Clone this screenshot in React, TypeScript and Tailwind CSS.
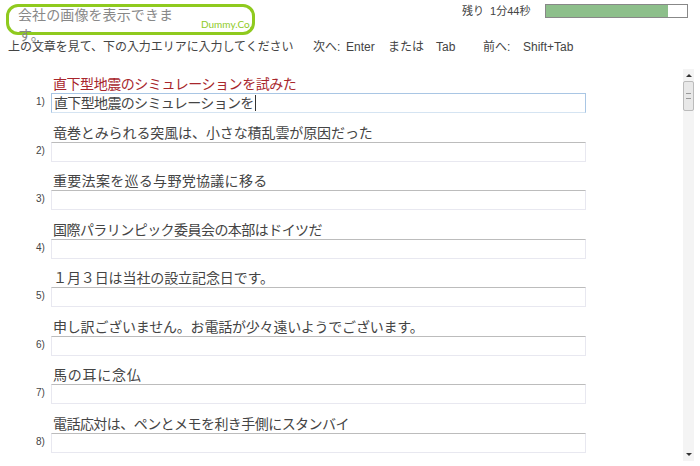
const questions = [
  { text: '直下型地震のシミュレーションを試みた', spacing: 'tracking-[-0.45px]' },
  { text: '竜巻とみられる突風は、小さな積乱雲が原因だった', spacing: 'tracking-[-0.1px]' },
  { text: '重要法案を巡る与野党協議に移る', spacing: 'tracking-[0.3px]' },
  { text: '国際パラリンピック委員会の本部はドイツだ', spacing: 'tracking-[-0.55px]' },
  { text: '１月３日は当社の設立記念日です。', spacing: 'tracking-[-0.1px]' },
  { text: '申し訳ございません。お電話が少々遠いようでございます。', spacing: 'tracking-[-0.2px]' },
  { text: '馬の耳に念仏', spacing: 'tracking-[0.75px]' },
  { text: '電話応対は、ペンとメモを利き手側にスタンバイ', spacing: 'tracking-[-0.55px]' },
];

const font = { fontFamily: '"Liberation Sans", "Noto Sans CJK JP", sans-serif' };

export default function App() {
  return (
    <div className="h-[466px] w-[700px] overflow-hidden bg-white text-[#444]" style={font}>
      <div className="flex h-[36px] items-start pl-[6px] pt-[4px]">
        <div className="flex h-[31px] w-[249px] items-end rounded-[12px] border-[3px] border-[#8fca1e] pl-[9px]">
          <span className="-mt-[2px] self-start text-[14px] leading-[20px] tracking-[0.1px] text-[#888]">会社の画像を表示できます。</span>
          <span className="mb-[2px] ml-[9px] text-[10px] leading-[12px] font-['Lato'] text-[#8fca1e]">Dummy.Co.</span>
        </div>
        <div className="ml-[207px] flex items-center">
          <span className="w-[83px] whitespace-pre text-[11px] leading-[14px]">残り  1分44秒</span>
          <div className="flex h-[14px] w-[143px] border border-[#888] bg-white">
            <div className="h-full w-[122px] bg-[#8dbf8b]" />
          </div>
        </div>
      </div>
      <div className="flex pl-[8px] pt-[3px] text-[12px] leading-[16px]">
        <span className="w-[305px] tracking-[-0.05px]">上の文章を見て、下の入力エリアに入力してください</span>
        <span className="w-[33px]">次へ:</span>
        <span className="w-[42px]">Enter</span>
        <span className="w-[48px]">または</span>
        <span className="w-[47px]">Tab</span>
        <span className="w-[40px]">前へ:</span>
        <span>Shift+Tab</span>
      </div>
      <div className="mt-[14px] flex h-[392px]">
        <div className="w-[683px] overflow-hidden pt-[5px]">
          {questions.map((q, i) => (
            <div key={q.text} className="mb-[9.5px] h-[39px] pl-[53px]">
              <p className={`h-[19px] text-[14px] leading-[20px] ${q.spacing} ${i === 0 ? 'text-[#a8262c]' : 'text-[#444]'}`}>{q.text}</p>
              <div className="relative -ml-[2px] flex h-[20px] w-[535px] items-center">
                <span className="absolute -left-[15px] top-[2px] text-[10px] leading-[14px]">{i + 1})</span>
                <div className={`flex h-full w-full items-center border pl-[2px] text-[14px] tracking-[-0.65px] ${i === 0 ? 'border-[#a9c6e4] border-b-[#d5e4f2]' : 'border-[#e8e8f0] border-t-[#bcbcbc]'}`}>
                  {i === 0 && <span className="border-r border-[#333] pr-px leading-[16px]">直下型地震のシミュレーションを</span>}
                </div>
              </div>
            </div>
          ))}
        </div>
        <div className="flex h-full w-[11px] flex-col items-center bg-[#f4f4f4]">
          <span className="mt-[5px] h-0 w-0 border-x-[3px] border-b-[3px] border-x-transparent border-b-[#333]" />
          <div className="mt-[4px] flex h-[30px] w-[11px] items-center justify-center rounded-[2px] border border-[#bbb] bg-[#e8e8e8]">
            <div className="h-[6px] w-[5px] border-y border-[#999]" />
          </div>
          <span className="mb-[5px] mt-auto h-0 w-0 border-x-[3px] border-t-[3px] border-x-transparent border-t-[#333]" />
        </div>
      </div>
    </div>
  );
}
